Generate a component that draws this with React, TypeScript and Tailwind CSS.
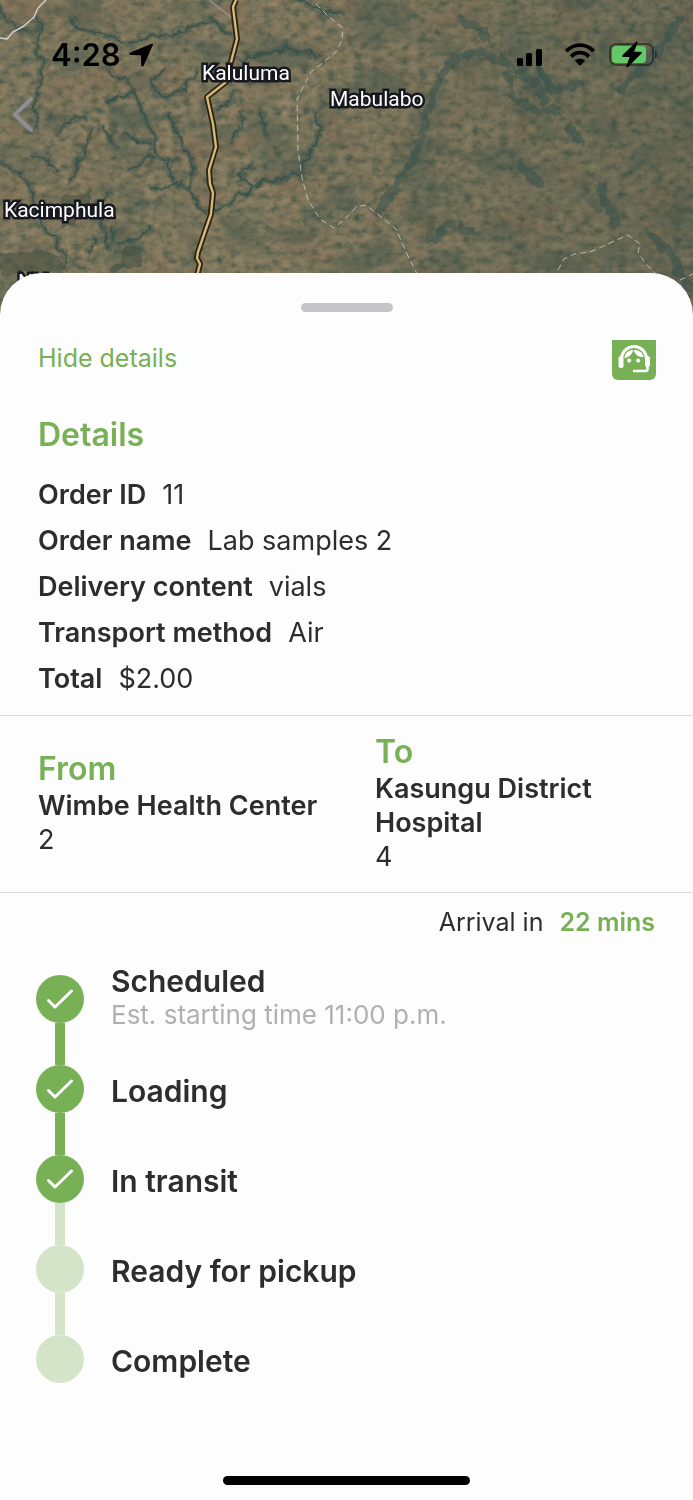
import React from "react"
import { clsx } from "clsx"

type Step = {
  label: string
  note?: string
  done: boolean
}

const details = [
  { label: "Order ID", value: "11" },
  { label: "Order name", value: "Lab samples 2" },
  { label: "Delivery content", value: "vials" },
  { label: "Transport method", value: "Air" },
  { label: "Total", value: "$2.00" },
]

const places = [
  { title: "From", name: "Wimbe Health Center", code: "2" },
  { title: "To", name: "Kasungu District Hospital", code: "4" },
]

const steps: Step[] = [
  { label: "Scheduled", note: "Est. starting time 11:00 p.m.", done: true },
  { label: "Loading", done: true },
  { label: "In transit", done: true },
  { label: "Ready for pickup", done: false },
  { label: "Complete", done: false },
]

// River beds and wooded valleys
const valleys = [
  "M110 72 L128 82 L136 92 L140 110 L152 128 L155 150 L168 164 L176 182 L190 194 L204 210",
  "M136 95 L120 96 L106 102",
  "M155 158 L142 160 L132 170",
  "M208 210 L228 206 L240 195 L256 185 L275 179 L300 176",
  "M190 192 L194 168 L186 148 L178 135 L170 116",
  "M166 70 L152 80 L155 92 L168 98 L184 88 L198 70",
  "M176 182 L160 190 L150 186",
  "M60 130 L76 117 L84 122",
  "M40 20 L36 50 L42 66 L38 86 L34 110 L36 126",
  "M100 125 L108 135 L117 148",
  "M125 134 L138 140 L150 144",
  "M92 128 L84 150 L76 166 L70 182",
  "M0 162 L16 172 L30 186 L34 210 L44 228 L60 246 L70 262",
  "M56 172 L48 160 L30 158",
  "M130 42 L150 38 L176 34 L202 24 L216 22 L230 34",
  "M0 8 L12 24 L28 32",
  "M70 22 L86 30 L108 34 L124 42",
  "M236 92 L226 104 L214 110",
  "M238 60 L262 54 L284 48 L320 56",
  "M250 165 L240 178 L255 186",
  "M300 172 L312 150 L320 130 L316 112",
  "M238 128 L232 140 M240 116 L242 128",
  "M262 110 L265 136",
  "M110 192 L98 206 L102 226",
  "M120 244 L140 236 L152 226",
  "M88 252 L98 240 M104 232 L106 246 M112 230 L114 240",
  "M300 0 L320 10 L342 14",
]

// Broad ridges on the east side
const ridges = [
  "M378 212 L400 180 L418 148 L428 112 L440 76 L456 58 L482 52 L505 62 L530 78 L546 100",
  "M460 20 L480 28 L488 38",
  "M508 75 L512 95 L530 108 L556 112",
  "M538 70 L552 90 L580 84",
  "M568 128 L580 140",
  "M520 165 L540 185",
  "M600 185 L606 205 L616 225",
  "M650 235 L668 250 L690 290",
  "M620 90 L650 60 L680 20",
  "M430 240 L450 225 L470 232",
]

const mapLabels = [
  { name: "Kaluluma", position: "left-[202px] top-[59px]" },
  { name: "Mabulabo", position: "left-[330px] top-[85px]" },
  { name: "Kacimphula", position: "left-[4px] top-[196px]" },
  { name: "Nkh", position: "left-[18px] top-[268px]" },
]

const mainRoad =
  "M236 0 L233 7 L237 39 L231 62 L226 82 L207 97 L213 124 L216 147 L209 170 L210 184 L213 193 L211 214 L198 252 L197 258 L200 264 L197 276"

function SatelliteMap() {
  return (
    <svg
      className="absolute inset-0 h-full w-full"
      viewBox="0 0 693 320"
      preserveAspectRatio="xMidYMin slice"
      aria-hidden="true"
    >
      <defs>
        <filter id="ground" x="0" y="0" width="100%" height="100%" colorInterpolationFilters="sRGB">
          <feTurbulence type="fractalNoise" baseFrequency="0.11 0.14" numOctaves="5" seed="11" />
          <feColorMatrix values="0.6 0.4 0 0 0  0.6 0.4 0 0 0  0.6 0.4 0 0 0  0 0 0 0 1" />
          <feComponentTransfer>
            <feFuncR type="table" tableValues="0.2 0.25 0.38 0.49 0.55 0.6 0.63" />
            <feFuncG type="table" tableValues="0.3 0.33 0.4 0.46 0.5 0.54 0.57" />
            <feFuncB type="table" tableValues="0.26 0.28 0.32 0.36 0.39 0.42 0.44" />
          </feComponentTransfer>
        </filter>
        <filter id="soil" x="0" y="0" width="100%" height="100%" colorInterpolationFilters="sRGB">
          <feTurbulence type="fractalNoise" baseFrequency="0.022 0.03" numOctaves="5" seed="5" />
          <feColorMatrix values="0 0 0 0 0.52  0 0 0 0 0.4  0 0 0 0 0.31  3 0 0 0 -1.5" />
        </filter>
        <filter id="woods" x="0" y="0" width="100%" height="100%" colorInterpolationFilters="sRGB">
          <feTurbulence type="fractalNoise" baseFrequency="0.02 0.028" numOctaves="7" seed="23" />
          <feColorMatrix values="0 0 0 0 0.24  0 0 0 0 0.33  0 0 0 0 0.29  0 4 0 0 -1.9" />
        </filter>
        <filter id="rough" x="-5%" y="-5%" width="110%" height="110%">
          <feTurbulence type="fractalNoise" baseFrequency="0.09" numOctaves="4" seed="3" />
          <feDisplacementMap in="SourceGraphic" scale="12" xChannelSelector="R" yChannelSelector="G" />
          <feGaussianBlur stdDeviation="0.7" />
        </filter>
        <linearGradient id="east">
          <stop offset="0.4" stopColor="#34463d" stopOpacity="0" />
          <stop offset="1" stopColor="#34463d" stopOpacity="0.3" />
        </linearGradient>
      </defs>

      <rect width="693" height="320" filter="url(#ground)" />
      <rect width="693" height="320" filter="url(#soil)" opacity="0.35" />
      <rect width="693" height="320" filter="url(#woods)" opacity="0.4" />
      <rect width="693" height="320" fill="url(#east)" />

      <g fill="none" stroke="#34504a" strokeLinecap="round" filter="url(#rough)">
        <g strokeWidth="7" opacity="0.35">
          {valleys.map((d) => (
            <path key={d} d={d} />
          ))}
        </g>
        <g strokeWidth="2" opacity="0.85">
          {valleys.map((d) => (
            <path key={d} d={d} />
          ))}
        </g>
        <g strokeWidth="8" opacity="0.5">
          {ridges.map((d) => (
            <path key={d} d={d} />
          ))}
        </g>
        <path
          d="M64 195 L92 190 L88 212 L60 232 Z M0 254 L40 248 L70 262 L60 274 L0 274 Z M125 250 L142 244 L140 266 L110 272 Z"
          fill="#3c4a3f"
          opacity="0.5"
        />
      </g>

      {/* District borders */}
      <g fill="none" stroke="#c9c8c2" strokeWidth="1" strokeDasharray="6 4" opacity="0.85">
        <path d="M316 4 L328 16 L343 28 L342 40 L336 52 L311 72 L297 99 L298 150 L302 178 L308 200 L320 219 L334 228 L346 218 L356 207 L366 205 L380 216 L396 229 L406 252 L417 274" />
        <path d="M558 270 L564 259 L574 254 L590 252 L610 243 L628 235 L640 244 L638 252 L646 264 L656 274" />
        <path d="M680 280 L693 274" />
      </g>

      {/* Roads */}
      <g fill="none" strokeLinejoin="round">
        <path d="M0 38 L7 39 L13 32 L24 26 L34 17 L38 8 L46 0" stroke="#d2cfc9" strokeWidth="1.5" />
        <path d="M209 0 L218 7 L235 20" stroke="#8f8a88" strokeWidth="2" />
        <path d={mainRoad} stroke="#2b2313" strokeWidth="6" />
        <path d={mainRoad} stroke="#d3b878" strokeWidth="2.4" />
      </g>
    </svg>
  )
}

function StatusBar() {
  return (
    <div className="relative flex items-center justify-between pl-[51px] pr-11 pt-9 text-black">
      <div className="flex items-center gap-2">
        <span className="text-[31px] font-semibold leading-[38px]">4:28</span>
        <svg className="h-6 w-6" viewBox="0 0 24 24" aria-hidden="true">
          <path
            d="M22.5 .7 C23.7 .1 24.3 .8 23.8 1.9 L14.8 22.6 C14.2 24 12.3 23.8 12.2 22.3 L12 13.4 C12 12.5 11.7 12.2 10.8 12.2 L1.8 12 C.2 11.9 0 10.2 1.4 9.6 Z"
            fill="black"
          />
        </svg>
      </div>
      <div className="flex items-center gap-[22px]">
        <svg className="h-6 w-[27px]" viewBox="0 0 27 24" aria-hidden="true">
          <rect x="1" y="15" width="6" height="8" rx="1.5" />
          <rect x="10" y="10" width="6" height="13" rx="1.5" />
          <rect x="20" y="6" width="6" height="17" rx="1.5" />
        </svg>
        <svg className="h-6 w-[30px]" viewBox="0 0 30 24" aria-hidden="true">
          <g fill="none" stroke="black" strokeWidth="3.8">
            <path d="M1.3 8.2 C9 .2 21 .2 28.7 8.2" />
            <path d="M6.1 13.6 C11.2 8.4 18.8 8.4 23.9 13.6" />
          </g>
          <path d="M10 17.8 C12.8 15.2 17.2 15.2 20 17.8 L15.7 22.2 C15.2 22.7 14.8 22.7 14.3 22.2 Z" />
        </svg>
        <svg className="-ml-2 h-7 w-10 overflow-visible" viewBox="0 0 40 28" aria-hidden="true">
          <rect x="1" y="3" width="43" height="21" rx="6" fill="none" stroke="black" strokeOpacity="0.4" strokeWidth="2" />
          <path d="M46 9.5 C48.5 10.5 48.5 16.5 46 17.5 Z" fillOpacity="0.45" />
          <rect x="3" y="5" width="34" height="17" rx="4" fill="#63c866" />
          <path
            d="M27 .9 L13.4 14.2 C12.9 14.9 13.2 15.9 14.2 15.9 H20.7 L17.3 25.2 C17.1 26.3 18.2 26.8 19 26 L32.4 12.4 C33 11.7 32.7 10.7 31.7 10.7 H25.1 L28.5 1.8 C28.8 .7 27.7 .2 27 .9 Z"
            fill="black"
          />
        </svg>
      </div>
    </div>
  )
}

function SupportIcon() {
  return (
    <svg className="h-10 w-11" viewBox="0 0 44 40" fill="none" aria-hidden="true">
      {/* headset band and ear cups */}
      <path d="M9.5 20 C9.5 2 34.5 2 34.5 20" stroke="white" strokeWidth="3" />
      <rect x="6.5" y="16" width="5" height="12" rx="2.5" fill="white" />
      <rect x="33" y="16" width="5" height="11" rx="2.5" fill="white" />
      <path d="M35.5 24 V29 Q35.5 31 33.5 31 H21" stroke="white" strokeWidth="2.6" />
      {/* fringe */}
      <path d="M12.4 18.2 C12.8 12.4 17.4 10 21 10 C20.6 13.8 17.8 17 12.4 18.2 Z" fill="white" />
      <path d="M21.6 10 C26.5 9.8 30.6 12.4 31.6 17 C26.6 17.4 23 14.6 21.6 10 Z" fill="white" />
      <circle cx="17.2" cy="20.6" r="2.1" fill="white" />
      <circle cx="26.2" cy="20.6" r="2.1" fill="white" />
    </svg>
  )
}

function TimelineStep({ step, next }: { step: Step; next?: Step }) {
  return (
    <li className="flex gap-[27px]">
      <div className="flex w-12 flex-col items-center">
        <span
          className={clsx(
            "flex h-12 w-12 items-center justify-center rounded-full",
            step.done ? "bg-[#78b055]" : "bg-[#d3e4c8]"
          )}
        >
          {step.done && (
            <svg className="h-7 w-7" viewBox="0 0 28 28" fill="none" aria-hidden="true">
              <path d="M2.5 15.5 L9 22 L25.5 6" stroke="white" strokeWidth="3" strokeLinecap="round" strokeLinejoin="round" />
            </svg>
          )}
        </span>
        {next && <span className={clsx("h-[42px] w-[10px]", next.done ? "bg-[#78b055]" : "bg-[#d3e4c8]")} />}
      </div>
      <div className={clsx("flex h-12 flex-col justify-center whitespace-nowrap", step.note ? "pb-2" : "pt-1")}>
        <span className="text-[30px] font-semibold leading-10">{step.label}</span>
        {step.note && <span className="text-[26px] leading-7 text-[#b0b0b0]">{step.note}</span>}
      </div>
    </li>
  )
}

export default function App() {
  return (
    <div className="flex min-h-screen flex-col bg-white font-['Inter',sans-serif] text-[#2d2d2f]">
      <header className="relative h-80 overflow-hidden bg-[#6b684f]">
        <SatelliteMap />
        {mapLabels.map((label) => (
          <span
            key={label.name}
            className={clsx(
              "absolute font-['Roboto',sans-serif] text-[21px] leading-7 text-white",
              "[-webkit-text-stroke:5px_#17191f] [paint-order:stroke_fill]",
              label.position
            )}
          >
            {label.name}
          </span>
        ))}
        <StatusBar />
        <button type="button" aria-label="Back" className="absolute left-3 top-24">
          <svg className="h-9 w-[22px]" viewBox="0 0 22 36" fill="none" aria-hidden="true">
            <path d="M19 3 L3 18.5 L19 34" stroke="#8e8d93" strokeWidth="4" strokeLinecap="round" strokeLinejoin="round" />
          </svg>
        </button>
      </header>

      <main className="relative -mt-[47px] flex flex-1 flex-col rounded-t-[42px] bg-[#fdfdfd] pt-[30px]">
        <div className="mx-auto h-[9px] w-[92px] rounded-full bg-[#c5c5c7]" />

        <div className="mt-7 flex items-start justify-between pl-[38px] pr-[37px]">
          <button type="button" className="text-[25px] leading-9 text-[#78b055]">
            Hide details
          </button>
          <button type="button" aria-label="Support" className="rounded-b-md bg-[#78b055]">
            <SupportIcon />
          </button>
        </div>

        <section className="px-[38px] pb-[13px] pt-[35px]">
          <h2 className="text-[32px] font-semibold leading-10 text-[#78b055]">Details</h2>
          <dl className="mt-[17px]">
            {details.map((item) => (
              <div key={item.label} className="flex gap-4 text-[27px] leading-[46px]">
                <dt className="font-semibold">{item.label}</dt>
                <dd>{item.value}</dd>
              </div>
            ))}
          </dl>
        </section>

        <section className="grid grid-cols-2 items-center gap-x-[57px] border-y border-[#dcdcdc] px-[38px] pb-[18px] pt-4">
          {places.map((place) => (
            <div key={place.title} className="text-[27px] leading-[34px]">
              <h2 className="text-[32px] font-semibold leading-10 text-[#78b055]">{place.title}</h2>
              <p className="font-semibold">{place.name}</p>
              <p>{place.code}</p>
            </div>
          ))}
        </section>

        <p className="flex justify-end gap-4 px-[38px] pt-[11px] text-[25px] leading-9">
          <span>Arrival in</span>
          <span className="font-semibold text-[#78b055]">22 mins</span>
        </p>

        <ol className="mt-[35px] px-9">
          {steps.map((step, index) => (
            <TimelineStep key={step.label} step={step} next={steps[index + 1]} />
          ))}
        </ol>

        <div className="mx-auto mb-[15px] mt-auto h-[9px] w-[247px] rounded-full bg-black" />
      </main>
    </div>
  )
}
